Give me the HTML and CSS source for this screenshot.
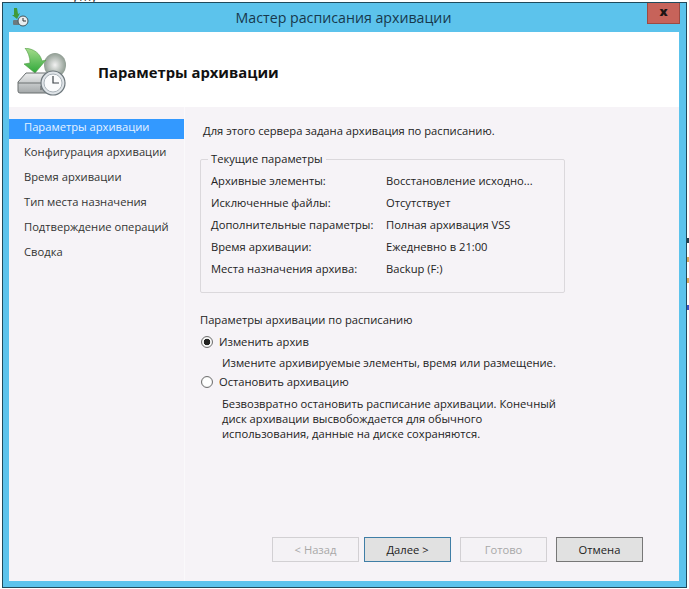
FILE: index.html
```html
<!DOCTYPE html>
<html lang="ru">
<head>
<meta charset="utf-8">
<title>Мастер расписания архивации</title>
<link rel="stylesheet" href="styles.css">
</head>
<body>
<span class="behind-text">утпу</span>
<span class="speck speck-dark"></span>
<span class="speck speck-orange"></span>
<span class="speck speck-orange2"></span>
<span class="speck speck-blue"></span>
<div class="window">
  <div class="titlebar">
    <svg class="title-icon" width="20" height="20" viewBox="0 0 20 20">
      <path d="M3 0h3l1 6 2-1-3 6-5-4 2 0z" fill="#3f9a3a"/>
      <rect x="2" y="12" width="11" height="5" rx="1" fill="#6b7a80"/>
      <circle cx="12" cy="13" r="5" fill="#e8edf0" stroke="#44555c"/>
      <path d="M12 10v3h3" fill="none" stroke="#333" stroke-width="1"/>
    </svg>
    <div class="title">Мастер расписания архивации</div>
    <div class="close"><span class="close-x">x</span></div>
  </div>
  <div class="client">
    <header class="header">
      <svg class="header-icon" width="50" height="50" viewBox="0 0 50 50">
        <defs>
          <linearGradient id="arrow" x1="0" y1="0" x2="0" y2="1"><stop offset="0" stop-color="#a6dc8c"/><stop offset="1" stop-color="#2fa83a"/></linearGradient>
          <linearGradient id="drive" x1="0" y1="0" x2="0" y2="1"><stop offset="0" stop-color="#eceeee"/><stop offset="1" stop-color="#a3a8a9"/></linearGradient>
          <radialGradient id="disc"><stop offset="0" stop-color="#f2f2f2"/><stop offset="1" stop-color="#8f9c92"/></radialGradient>
        </defs>
        <ellipse cx="38" cy="17" rx="11" ry="12" fill="url(#disc)"/>
        <path d="M8 0c9 1 15 5 17 13l4-1-11 13L7 16l6-1C13 9 11 4 8 0z" fill="url(#arrow)" stroke="#4b9a3f" stroke-width=".6"/>
        <path d="M1 34l8-9h20l4 9v9a2 2 0 0 1-2 2H3a2 2 0 0 1-2-2z" fill="url(#drive)" stroke="#6a7071"/>
        <path d="M1 35h32" stroke="#6a7071" fill="none"/>
        <path d="M24 38v4M27 38v4M30 38v4" stroke="#55595a" fill="none"/>
        <circle cx="36" cy="35" r="12" fill="#dfe4e8" stroke="#6d777c" stroke-width="1.2"/>
        <circle cx="36" cy="35" r="9" fill="#fafbfc" stroke="#a9b2b8"/>
        <path d="M36 28v7h6" fill="none" stroke="#3c4448" stroke-width="1.2"/>
      </svg>
      <h1 class="page-title">Параметры архивации</h1>
    </header>
    <div class="body">
      <nav class="nav">
        <div class="nav-item nav-active">Параметры архивации</div>
        <div class="nav-item">Конфигурация архивации</div>
        <div class="nav-item">Время архивации</div>
        <div class="nav-item">Тип места назначения</div>
        <div class="nav-item">Подтверждение операций</div>
        <div class="nav-item">Сводка</div>
      </nav>
      <main class="main">
        <p class="intro">Для этого сервера задана архивация по расписанию.</p>
        <fieldset class="group">
          <legend class="legend">Текущие параметры</legend>
          <dl class="params">
            <dt>Архивные элементы:</dt><dd>Восстановление исходно...</dd>
            <dt>Исключенные файлы:</dt><dd>Отсутствует</dd>
            <dt>Дополнительные параметры:</dt><dd>Полная архивация VSS</dd>
            <dt>Время архивации:</dt><dd>Ежедневно в 21:00</dd>
            <dt>Места назначения архива:</dt><dd>Backup (F:)</dd>
          </dl>
        </fieldset>
        <div class="schedule-title">Параметры архивации по расписанию</div>
        <div class="option option-first"><span class="radio radio-on"></span>Изменить архив</div>
        <div class="option-desc">Измените архивируемые элементы, время или размещение.</div>
        <div class="option option-second"><span class="radio"></span>Остановить архивацию</div>
        <div class="option-desc option-desc-long">Безвозвратно остановить расписание архивации. Конечный<br>диск архивации высвобождается для обычного<br>использования, данные на диске сохраняются.</div>
        <div class="buttons">
          <button class="btn btn-disabled">&lt; Назад</button>
          <button class="btn btn-default">Далее &gt;</button>
          <button class="btn btn-disabled btn-finish">Готово</button>
          <button class="btn btn-cancel">Отмена</button>
        </div>
      </main>
    </div>
  </div>
</div>
</body>
</html>
```
FILE: styles.css
```css
* { box-sizing: border-box; }
html, body { margin: 0; height: 100%; background: #fff; }
body {
  padding: 2px 2px 1px 2px;
  font-family: "Open Sans", "Noto Sans", sans-serif;
  font-size: 11.2px;
  color: #222;
  position: relative;
  overflow: hidden;
}
.behind-text {
  position: absolute;
  left: 72px;
  top: -11px;
  font-size: 12px;
  line-height: 16px;
  color: #333;
}
.speck { position: absolute; left: 687px; width: 2px; height: 5px; }
.speck-dark { top: 238px; background: #29424f; }
.speck-orange { top: 257px; background: #d9a85a; }
.speck-orange2 { top: 278px; background: #d9a85a; }
.speck-blue { top: 305px; background: #3a55c8; }
.window {
  position: relative;
  height: 586px;
  display: flex;
  flex-direction: column;
  background: #5cc3ec;
  border: 1px solid #1f4a5c;
  padding: 0 7px 6px 6px;
}
.titlebar {
  height: 29px;
  flex: none;
  display: flex;
  align-items: flex-start;
}
.title-icon { margin: 5px 0 0 2px; }
.title {
  flex: 1;
  text-align: center;
  font-size: 14.2px;
  line-height: 30px;
  color: #17384c;
  padding-left: 9px;
}
.close {
  width: 33px;
  height: 21px;
  margin-right: -1px;
  background: #c7635a;
  border: 1px solid #9c4a42;
  border-top: 0;
  text-align: center;
  line-height: 17px;
  font-weight: 800;
  font-size: 13px;
  color: #1d1414;
}
.client {
  flex: 1;
  display: flex;
  flex-direction: column;
  background: #f6f3f7;
  min-height: 0;
}
.header {
  height: 75px;
  flex: none;
  background: #fff;
  display: flex;
  align-items: center;
}
.header-icon { margin: 6px 0 0 8px; }
.page-title {
  margin: 5px 0 0 31px;
  font-size: 14.8px;
  font-weight: 700;
  color: #111;
}
.body { flex: 1; display: flex; min-height: 0; }
.nav {
  width: 176px;
  flex: none;
  padding-top: 12px;
  border-right: 1px solid #faf9fb;
}
.nav-item {
  height: 25px;
  padding: 0 0 5px 15px;
  line-height: 16px;
  color: #333;
}
.nav-active {
  height: 20px;
  margin-bottom: 5px;
  padding: 0 0 0 15px;
  background: #3399ff;
  color: #e6f2ff;
}
.main {
  flex: 1;
  display: flex;
  flex-direction: column;
  padding: 15px 0 0 15px;
  min-width: 0;
}
.intro { margin: 0 0 0 3px; line-height: 17px; color: #222; }
.group {
  width: 365px;
  height: 142px;
  margin: 12px 0 0 0;
  padding: 0 0 0 10px;
  border: 1px solid #dbd8dc;
  border-radius: 2px;
}
.legend { padding: 0 3px; margin-left: -3px; line-height: 16px; }
.params {
  margin: 3px 0 0 0;
  display: grid;
  grid-template-columns: 175px 1fr;
  grid-auto-rows: 22px;
  align-items: center;
  line-height: 16px;
}
.params dt, .params dd { margin: 0; }
.schedule-title { margin: 18px 0 0 0; line-height: 17px; }
.option { display: flex; align-items: center; line-height: 17px; margin-left: 1px; }
.option-first { margin-top: 5px; }
.option-second { margin-top: 2px; }
.radio {
  width: 12px;
  height: 12px;
  margin-right: 6px;
  flex: none;
  border-radius: 50%;
  border: 1px solid #6f6f6f;
  background: #fff;
  box-shadow: inset 0 0 1px #bbb;
}
.radio-on { background: radial-gradient(circle, #222 0 3px, #fff 3.6px); }
.option-desc { margin: 4px 0 0 22px; line-height: 17px; }
.option-desc-long { margin-top: 6px; line-height: 15px; }
.buttons {
  margin-top: auto;
  margin-bottom: 19px;
  padding-left: 72px;
  display: flex;
  gap: 5px;
}
.btn {
  width: 87px;
  height: 25px;
  padding: 0;
  font: inherit;
  border: 1px solid #777;
  background: #e1e1e1;
  color: #222;
}
.btn-default { border-color: #3f7ea6; }
.btn-disabled { background: #f4f2f5; border-color: #d2d0d3; color: #a8a8a8; }
.btn-finish { margin-left: 4px; }
.btn-cancel { margin-left: 4px; }
```
